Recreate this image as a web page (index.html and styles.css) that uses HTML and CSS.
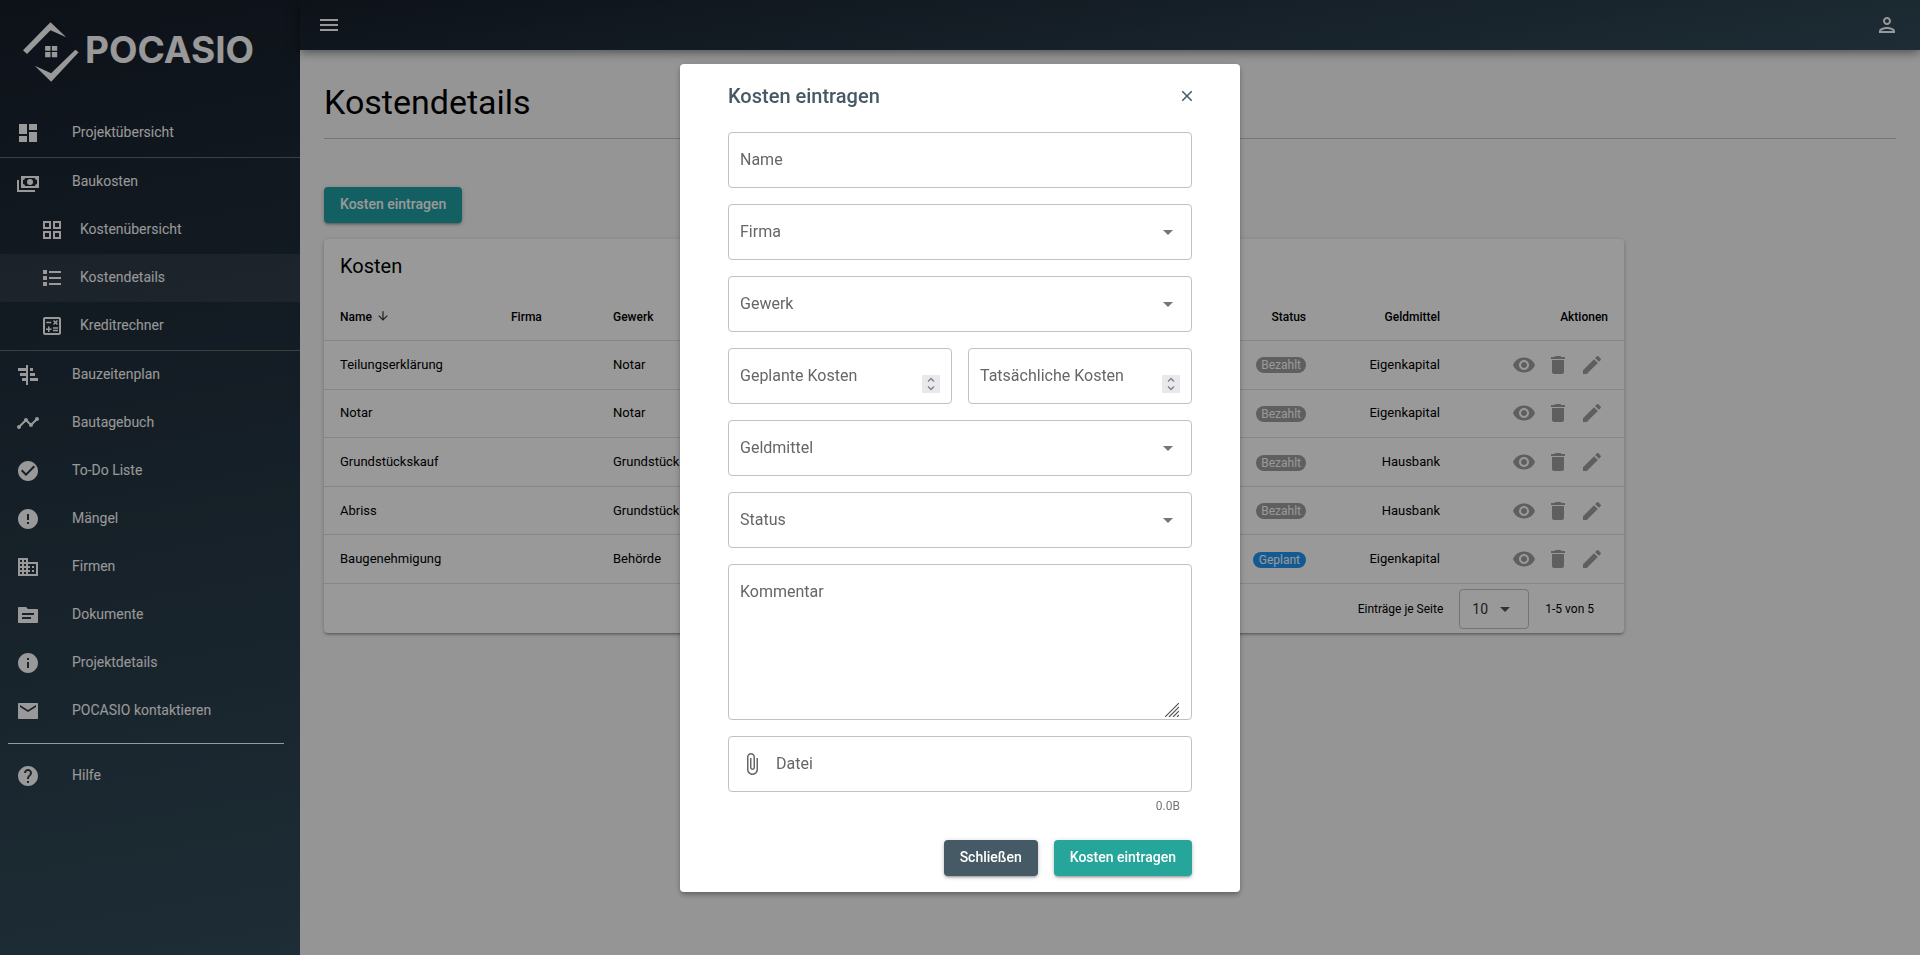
FILE: index.html
```html
<!DOCTYPE html>
<html lang="de">
<head>
<meta charset="utf-8">
<title>POCASIO – Kostendetails</title>
<link rel="stylesheet" href="styles.css">
</head>
<body>
<svg class="sprite" aria-hidden="true">
  <symbol id="menu" viewBox="0 0 24 24"><path d="M3 18h18v-2H3v2zm0-5h18v-2H3v2zm0-7v2h18V6H3z"/></symbol>
  <symbol id="person" viewBox="0 0 24 24"><path d="M12 6c1.1 0 2 .9 2 2s-.9 2-2 2-2-.9-2-2 .9-2 2-2m0 10c2.7 0 5.8 1.29 6 2H6c.23-.72 3.31-2 6-2m0-12C9.79 4 8 5.79 8 8s1.79 4 4 4 4-1.79 4-4-1.79-4-4-4zm0 10c-2.67 0-8 1.34-8 4v2h16v-2c0-2.66-5.33-4-8-4z"/></symbol>
  <symbol id="dashboard" viewBox="0 0 24 24"><path d="M3 13h8V3H3v10zm0 8h8v-6H3v6zm10 0h8V11h-8v10zm0-18v6h8V3h-8z"/></symbol>
  <symbol id="payments" viewBox="0 0 24 24"><path fill-rule="evenodd" d="M5 6h18v12H5zM9 8c0 1.1-.9 2-2 2v4c1.1 0 2 .9 2 2h10c0-1.1.9-2 2-2v-4c-1.1 0-2-.9-2-2z"/><circle cx="14" cy="12" r="3"/><path d="M1 10h2v10h16v2H1z"/></symbol>
  <symbol id="grid" viewBox="0 0 24 24"><path d="M3 3v8h8V3H3zm6 6H5V5h4v4zm-6 4v8h8v-8H3zm6 6H5v-4h4v4zm4-16v8h8V3h-8zm6 6h-4V5h4v4zm-6 4v8h8v-8h-8zm6 6h-4v-4h4v4z"/></symbol>
  <symbol id="list" viewBox="0 0 24 24"><path d="M3 4h4v4H3zM3 10h4v4H3zM3 16h4v4H3zM9 5h12v2H9zM9 11h12v2H9zM9 17h12v2H9z"/></symbol>
  <symbol id="calculate" viewBox="0 0 24 24"><path d="M19 3H5c-1.1 0-2 .9-2 2v14c0 1.1.9 2 2 2h14c1.1 0 2-.9 2-2V5c0-1.1-.9-2-2-2zm0 16H5V5h14v14z"/><path d="M6.25 7.72h5v1.5h-5zM13 15.75h5v1.5h-5zM13 13.25h5v1.5h-5zM8 18h1.5v-2h2v-1.5h-2v-2H8v2H6V16h2zM14.09 10.95l1.41-1.41 1.41 1.41 1.06-1.06-1.41-1.42 1.41-1.41L16.91 6l-1.41 1.41L14.09 6l-1.06 1.06 1.41 1.41-1.41 1.42z"/></symbol>
  <symbol id="plan" viewBox="0 0 24 24"><path d="M10 2h2v20h-2zM2 5h8v3H2zM4 10h6v3H4zM6 15h4v3H6zM14 5h3v3h-3zM14 10h5v3h-5zM14 15h8v3h-8z"/></symbol>
  <symbol id="timeline" viewBox="0 0 24 24"><path d="M23 8c0 1.1-.9 2-2 2-.18 0-.35-.02-.51-.07l-3.56 3.55c.05.16.07.34.07.52 0 1.1-.9 2-2 2s-2-.9-2-2c0-.18.02-.36.07-.52l-2.55-2.55c-.16.05-.34.07-.52.07s-.36-.02-.52-.07l-4.55 4.56c.05.16.07.33.07.51 0 1.1-.9 2-2 2s-2-.9-2-2 .9-2 2-2c.18 0 .35.02.51.07l4.56-4.55C8.02 9.36 8 9.18 8 9c0-1.1.9-2 2-2s2 .9 2 2c0 .18-.02.36-.07.52l2.55 2.55c.16-.05.34-.07.52-.07s.36.02.52.07l3.55-3.56C19.02 8.35 19 8.18 19 8c0-1.1.9-2 2-2s2 .9 2 2z"/></symbol>
  <symbol id="check" viewBox="0 0 24 24"><path d="M12 2C6.48 2 2 6.48 2 12s4.48 10 10 10 10-4.48 10-10S17.52 2 12 2zm-2 15l-5-5 1.41-1.41L10 14.17l7.59-7.59L19 8l-9 9z"/></symbol>
  <symbol id="error" viewBox="0 0 24 24"><path d="M12 2C6.48 2 2 6.48 2 12s4.48 10 10 10 10-4.48 10-10S17.52 2 12 2zm1 15h-2v-2h2v2zm0-4h-2V7h2v6z"/></symbol>
  <symbol id="business" viewBox="0 0 24 24"><path d="M12 7V3H2v18h20V7H12zM6 19H4v-2h2v2zm0-4H4v-2h2v2zm0-4H4V9h2v2zm0-4H4V5h2v2zm4 12H8v-2h2v2zm0-4H8v-2h2v2zm0-4H8V9h2v2zm0-4H8V5h2v2zm10 12h-8v-2h2v-2h-2v-2h2v-2h-2V9h8v10zm-2-8h-2v2h2v-2zm0 4h-2v2h2v-2z"/></symbol>
  <symbol id="source" viewBox="0 0 24 24"><path d="M21 6h-9l-2-2H3c-.6 0-1 .4-1 1v14c0 .6.4 1 1 1h18c.6 0 1-.4 1-1V7c0-.6-.4-1-1-1zm-6 10H6v-2h9v2zm3-4H6v-2h12v2z"/></symbol>
  <symbol id="info" viewBox="0 0 24 24"><path d="M12 2C6.48 2 2 6.48 2 12s4.48 10 10 10 10-4.48 10-10S17.52 2 12 2zm1 15h-2v-6h2v6zm0-8h-2V7h2v2z"/></symbol>
  <symbol id="mail" viewBox="0 0 24 24"><path d="M21.5 4h-19c-.3 0-.5.2-.5.5v15c0 .3.2.5.5.5h19c.3 0 .5-.2.5-.5v-15c0-.3-.2-.5-.5-.5zM20 8l-8 5-8-5V6l8 5 8-5v2z"/></symbol>
  <symbol id="help" viewBox="0 0 24 24"><path d="M12 2C6.48 2 2 6.48 2 12s4.48 10 10 10 10-4.48 10-10S17.52 2 12 2zm1 17h-2v-2h2v2zm2.07-7.75l-.9.92C13.45 12.9 13 13.5 13 15h-2v-.5c0-1.1.45-2.1 1.17-2.83l1.24-1.26c.37-.36.59-.86.59-1.41 0-1.1-.9-2-2-2s-2 .9-2 2H8c0-2.21 1.79-4 4-4s4 1.79 4 4c0 .88-.36 1.68-.93 2.25z"/></symbol>
  <symbol id="eye" viewBox="0 0 24 24"><path d="M12 4.5C7 4.5 2.73 7.61 1 12c1.73 4.39 6 7.5 11 7.5s9.27-3.11 11-7.5c-1.73-4.39-6-7.5-11-7.5zM12 17c-2.76 0-5-2.24-5-5s2.24-5 5-5 5 2.24 5 5-2.24 5-5 5zm0-8c-1.66 0-3 1.34-3 3s1.34 3 3 3 3-1.34 3-3-1.34-3-3-3z"/></symbol>
  <symbol id="trash" viewBox="0 0 24 24"><path d="M6 19c0 1.1.9 2 2 2h8c1.1 0 2-.9 2-2V7H6v12zM19 4h-3.5l-1-1h-5l-1 1H5v2h14V4z"/></symbol>
  <symbol id="edit" viewBox="0 0 24 24"><path d="M3 17.25V21h3.75L17.81 9.94l-3.75-3.75L3 17.25zM20.71 7.04c.39-.39.39-1.02 0-1.41l-2.34-2.34c-.39-.39-1.02-.39-1.41 0l-1.83 1.83 3.75 3.75 1.83-1.83z"/></symbol>
  <symbol id="drop" viewBox="0 0 24 24"><path d="M7 10l5 5 5-5z"/></symbol>
  <symbol id="down" viewBox="0 0 24 24"><path d="M20 12l-1.41-1.41L13 16.17V4h-2v12.17l-5.58-5.59L4 12l8 8 8-8z"/></symbol>
  <symbol id="close" viewBox="0 0 24 24"><path d="M19 6.41L17.59 5 12 10.59 6.41 5 5 6.41 10.59 12 5 17.59 6.41 19 12 13.41 17.59 19 19 17.59 13.41 12z"/></symbol>
  <symbol id="clip" viewBox="0 0 24 24"><path d="M16.5 6v11.5c0 2.21-1.79 4-4 4s-4-1.79-4-4V5c0-1.38 1.12-2.5 2.5-2.5s2.5 1.12 2.5 2.5v10.5c0 .55-.45 1-1 1s-1-.45-1-1V6H10v9.5c0 1.38 1.12 2.5 2.5 2.5s2.5-1.12 2.5-2.5V5c0-2.21-1.79-4-4-4S7 2.79 7 5v12.5c0 3.04 2.46 5.5 5.5 5.5s5.5-2.46 5.5-5.5V6h-1.5z"/></symbol>
  <symbol id="spin" viewBox="0 0 18 18"><path d="M6 6.5l3-3 3 3M6 11.5l3 3 3-3" fill="none" stroke="#84848c" stroke-width="1.5"/></symbol>
  <symbol id="grip" viewBox="0 0 14 14"><path d="M0 14L14 0M4 14L14 4M8 14l6-6M12 14l2-2" fill="none" stroke="#555" stroke-width="1.2"/></symbol>
</svg>

<div class="app">
  <aside class="sidebar">
    <a class="logo" href="#">
      <svg class="logo-mark" viewBox="69 67 167 178" aria-hidden="true"><path d="M69 151L151 67 198 112 151 91 81 162zM235 157L153 245 104 197 153 219 225 149zM135 138h16v14h-16zM155 138h16v14h-16zM135 156h16v16h-16zM155 156h16v16h-16z"/></svg>
      <span class="logo-text">POCASIO</span>
    </a>
    <nav class="nav">
      <a class="nav-item" href="#"><svg class="icon"><use href="#dashboard"/></svg><span>Projektübersicht</span></a>
      <div class="nav-group">
        <a class="nav-item" href="#"><svg class="icon"><use href="#payments"/></svg><span>Baukosten</span></a>
        <a class="nav-item sub" href="#"><svg class="icon"><use href="#grid"/></svg><span>Kostenübersicht</span></a>
        <a class="nav-item sub active" href="#"><svg class="icon"><use href="#list"/></svg><span>Kostendetails</span></a>
        <a class="nav-item sub" href="#"><svg class="icon"><use href="#calculate"/></svg><span>Kreditrechner</span></a>
      </div>
      <a class="nav-item" href="#"><svg class="icon"><use href="#plan"/></svg><span>Bauzeitenplan</span></a>
      <a class="nav-item" href="#"><svg class="icon"><use href="#timeline"/></svg><span>Bautagebuch</span></a>
      <a class="nav-item" href="#"><svg class="icon"><use href="#check"/></svg><span>To-Do Liste</span></a>
      <a class="nav-item" href="#"><svg class="icon"><use href="#error"/></svg><span>Mängel</span></a>
      <a class="nav-item" href="#"><svg class="icon"><use href="#business"/></svg><span>Firmen</span></a>
      <a class="nav-item" href="#"><svg class="icon"><use href="#source"/></svg><span>Dokumente</span></a>
      <a class="nav-item" href="#"><svg class="icon"><use href="#info"/></svg><span>Projektdetails</span></a>
      <a class="nav-item" href="#"><svg class="icon"><use href="#mail"/></svg><span>POCASIO kontaktieren</span></a>
      <hr class="nav-rule">
      <a class="nav-item" href="#"><svg class="icon"><use href="#help"/></svg><span>Hilfe</span></a>
    </nav>
  </aside>

  <div class="content">
    <header class="topbar">
      <button class="icon-btn" type="button" aria-label="Menü"><svg class="icon"><use href="#menu"/></svg></button>
      <button class="icon-btn" type="button" aria-label="Konto"><svg class="icon"><use href="#person"/></svg></button>
    </header>
    <main class="page">
      <h1 class="page-title">Kostendetails</h1>
      <button class="btn btn-page" type="button">Kosten eintragen</button>
      <section class="card">
        <h2 class="card-title">Kosten</h2>
        <table class="costs">
          <colgroup><col class="c-name"><col class="c-firm"><col><col class="c-status"><col class="c-money"><col class="c-actions"></colgroup>
          <thead>
            <tr><th>Name<svg class="sort"><use href="#down"/></svg></th><th>Firma</th><th>Gewerk</th><th class="r">Status</th><th class="r">Geldmittel</th><th class="r">Aktionen</th></tr>
          </thead>
          <tbody>
            <tr><td>Teilungserklärung</td><td></td><td>Notar</td><td class="r"><span class="badge">Bezahlt</span></td><td class="r">Eigenkapital</td><td><div class="actions"><button type="button" aria-label="Ansehen"><svg class="icon"><use href="#eye"/></svg></button><button type="button" aria-label="Löschen"><svg class="icon"><use href="#trash"/></svg></button><button type="button" aria-label="Bearbeiten"><svg class="icon"><use href="#edit"/></svg></button></div></td></tr>
            <tr><td>Notar</td><td></td><td>Notar</td><td class="r"><span class="badge">Bezahlt</span></td><td class="r">Eigenkapital</td><td><div class="actions"><button type="button" aria-label="Ansehen"><svg class="icon"><use href="#eye"/></svg></button><button type="button" aria-label="Löschen"><svg class="icon"><use href="#trash"/></svg></button><button type="button" aria-label="Bearbeiten"><svg class="icon"><use href="#edit"/></svg></button></div></td></tr>
            <tr><td>Grundstückskauf</td><td></td><td>Grundstück</td><td class="r"><span class="badge">Bezahlt</span></td><td class="r">Hausbank</td><td><div class="actions"><button type="button" aria-label="Ansehen"><svg class="icon"><use href="#eye"/></svg></button><button type="button" aria-label="Löschen"><svg class="icon"><use href="#trash"/></svg></button><button type="button" aria-label="Bearbeiten"><svg class="icon"><use href="#edit"/></svg></button></div></td></tr>
            <tr><td>Abriss</td><td></td><td>Grundstück</td><td class="r"><span class="badge">Bezahlt</span></td><td class="r">Hausbank</td><td><div class="actions"><button type="button" aria-label="Ansehen"><svg class="icon"><use href="#eye"/></svg></button><button type="button" aria-label="Löschen"><svg class="icon"><use href="#trash"/></svg></button><button type="button" aria-label="Bearbeiten"><svg class="icon"><use href="#edit"/></svg></button></div></td></tr>
            <tr><td>Baugenehmigung</td><td></td><td>Behörde</td><td class="r"><span class="badge planned">Geplant</span></td><td class="r">Eigenkapital</td><td><div class="actions"><button type="button" aria-label="Ansehen"><svg class="icon"><use href="#eye"/></svg></button><button type="button" aria-label="Löschen"><svg class="icon"><use href="#trash"/></svg></button><button type="button" aria-label="Bearbeiten"><svg class="icon"><use href="#edit"/></svg></button></div></td></tr>
          </tbody>
        </table>
        <div class="pager">
          <label for="per-page">Einträge je Seite</label>
          <div class="pager-select">
            <select id="per-page"><option>10</option><option>25</option></select>
            <svg class="icon"><use href="#drop"/></svg>
          </div>
          <span>1-5 von 5</span>
        </div>
      </section>
    </main>
  </div>
</div>

<div class="backdrop">
  <form class="dialog" role="dialog" aria-modal="true" aria-labelledby="dialog-title">
    <div class="dialog-head">
      <h2 class="dialog-title" id="dialog-title">Kosten eintragen</h2>
      <button class="close" type="button" aria-label="Dialog schließen"><svg><use href="#close"/></svg></button>
    </div>
    <div class="fields">
      <div class="field"><input id="f-name" type="text"><label for="f-name">Name</label></div>
      <div class="field"><select id="f-firma"><option></option></select><label for="f-firma">Firma</label><svg class="icon drop"><use href="#drop"/></svg></div>
      <div class="field"><select id="f-gewerk"><option></option></select><label for="f-gewerk">Gewerk</label><svg class="icon drop"><use href="#drop"/></svg></div>
      <div class="field-row">
        <div class="field"><input id="f-plan" type="number"><label for="f-plan">Geplante Kosten</label><svg class="spin"><use href="#spin"/></svg></div>
        <div class="field"><input id="f-ist" type="number"><label for="f-ist">Tatsächliche Kosten</label><svg class="spin"><use href="#spin"/></svg></div>
      </div>
      <div class="field"><select id="f-geld"><option></option></select><label for="f-geld">Geldmittel</label><svg class="icon drop"><use href="#drop"/></svg></div>
      <div class="field"><select id="f-status"><option></option></select><label for="f-status">Status</label><svg class="icon drop"><use href="#drop"/></svg></div>
      <div class="field"><textarea id="f-kommentar"></textarea><label for="f-kommentar">Kommentar</label><svg class="grip"><use href="#grip"/></svg></div>
      <div class="field file"><input id="f-datei" type="file"><label for="f-datei"><svg class="icon"><use href="#clip"/></svg>Datei</label></div>
    </div>
    <p class="counter">0.0B</p>
    <div class="dialog-actions">
      <button class="btn btn-dark" type="button">Schließen</button>
      <button class="btn btn-teal" type="submit">Kosten eintragen</button>
    </div>
  </form>
</div>
</body>
</html>
```
FILE: styles.css
```css
* { box-sizing: border-box; }

body {
  margin: 0;
  font-family: Roboto, "Liberation Sans", sans-serif;
  font-size: 14px;
  line-height: 20px;
  color: #000;
  background: #f9f9f9;
}

button, input, select, textarea { font: inherit; color: inherit; }
h1, h2, p { margin: 0; }
a { color: inherit; text-decoration: none; }

.sprite { display: none; }
.icon { display: block; flex: none; width: 24px; height: 24px; fill: currentColor; }

.app { display: flex; min-height: 100vh; }

/* Sidebar */
.sidebar {
  flex: none;
  width: 300px;
  color: #fff;
  background: linear-gradient(170deg, #171e2a, #324c5a);
}
.logo { display: flex; align-items: center; gap: 6px; height: 109px; padding: 0 23px 6px; }
.logo-mark { flex: none; width: 56px; height: 60px; fill: #fff; }
.logo-text { padding-bottom: 4px; font-family: Inter, sans-serif; font-size: 37px; font-weight: 700; line-height: 40px; }

.nav-item { display: flex; align-items: center; gap: 32px; height: 48px; padding: 0 16px; }
.nav-item span { padding-bottom: 2px; }
.nav-item.sub { gap: 16px; padding-left: 40px; }
.nav-item.active { background: rgba(255, 255, 255, 0.08); }
.nav-group { border: solid #6a6a6a; border-width: 1px 0; }
.nav-rule { height: 1px; margin: 8px 16px 8px 8px; border: 0; background: #fff; }

/* Top bar and page */
.content { flex: 1; min-width: 0; }
.topbar {
  display: flex;
  align-items: center;
  justify-content: space-between;
  height: 50px;
  padding: 0 21px 0 17px;
  color: #fff;
  background: linear-gradient(170deg, #171e2a, #324c5a);
  box-shadow: 0 2px 10px rgba(0, 0, 0, 0.5);
}
.icon-btn { padding: 0; border: 0; background: none; }

.page { padding: 24px; }
.page-title {
  height: 65px;
  margin-bottom: 48px;
  border-bottom: 1px solid #c4c4c4;
  font-size: 34px;
  font-weight: 400;
  line-height: 56px;
}

.btn {
  display: block;
  height: 36px;
  padding: 0 16px 2px;
  border: 0;
  border-radius: 4px;
  color: #fff;
  font-weight: 500;
  box-shadow: 0 1px 5px rgba(0, 0, 0, 0.2), 0 2px 2px rgba(0, 0, 0, 0.14), 0 3px 1px -2px rgba(0, 0, 0, 0.12);
}
.btn-page { background: #21a0a6; }
.btn-teal { background: #26a69a; }
.btn-dark { background: #455a64; }

.card {
  max-width: 1300px;
  margin-top: 16px;
  border-radius: 4px;
  background: #fff;
  box-shadow: 0 1px 5px rgba(0, 0, 0, 0.2), 0 2px 2px rgba(0, 0, 0, 0.14), 0 3px 1px -2px rgba(0, 0, 0, 0.12);
}
.card-title { padding: 11px 16px; font-size: 20px; font-weight: 400; line-height: 32px; }

.costs { width: 100%; height: 291px; table-layout: fixed; border-collapse: separate; border-spacing: 0; font-size: 13px; }
.c-name { width: 171px; }
.c-firm { width: 102px; }
.c-status { width: 120px; }
.c-money { width: 134px; }
.c-actions { width: 168px; }
.costs th, .costs td { padding: 0 16px; border-bottom: 1px solid #e0e0e0; text-align: left; }
.costs th { height: 48px; font-size: 12px; font-weight: 500; }
.costs .r { text-align: right; }
.sort { width: 14px; height: 14px; margin-left: 4px; vertical-align: -2px; fill: #333; }
.badge {
  display: inline-block;
  padding: 2px 5px;
  border-radius: 8px;
  color: #fff;
  font-size: 12px;
  line-height: 12px;
  vertical-align: middle;
  background: #9e9e9e;
}
.badge.planned { padding: 2px 6px; background: #2196f3; }
.actions { display: flex; justify-content: flex-end; margin-right: -1px; color: #9e9e9e; }
.actions button { padding: 0 5px; border: 0; background: none; }

.pager {
  display: flex;
  align-items: center;
  justify-content: flex-end;
  gap: 16px;
  height: 49px;
  padding-right: 30px;
  font-size: 12px;
}
.pager-select { position: relative; width: 70px; color: #555; }
.pager-select select {
  display: block;
  width: 100%;
  height: 40px;
  padding: 0 12px;
  border: 1px solid #c2c2c2;
  border-radius: 4px;
  background: none;
  color: #333;
  font-size: 14px;
  appearance: none;
}
.pager-select .icon { position: absolute; top: 8px; right: 12px; pointer-events: none; }

/* Dialog */
.backdrop {
  position: fixed;
  inset: 0;
  display: grid;
  place-items: center;
  background: rgba(0, 0, 0, 0.4);
}
.dialog {
  width: 560px;
  max-width: 100%;
  padding: 16px 48px;
  border-radius: 4px;
  background: #fff;
  box-shadow: 0 2px 4px -1px rgba(0, 0, 0, 0.2), 0 4px 5px rgba(0, 0, 0, 0.14), 0 1px 10px rgba(0, 0, 0, 0.12);
}
.dialog-head { display: flex; align-items: center; justify-content: space-between; margin-bottom: 20px; color: #455a64; }
.dialog-title { font-size: 20px; font-weight: 500; line-height: 32px; }
.close { margin-right: -4px; padding: 0; border: 0; background: none; }
.close svg { display: block; width: 18px; height: 18px; fill: currentColor; }

.fields { display: grid; gap: 16px; color: #666; }
.field-row { display: grid; grid-template-columns: 1fr 1fr; gap: 16px; }
.field { position: relative; font-size: 16px; }
.field input, .field select, .field textarea {
  display: block;
  width: 100%;
  height: 56px;
  padding: 16px 12px 0;
  border: 1px solid #c2c2c2;
  border-radius: 4px;
  background: none;
  appearance: none;
  resize: none;
}
.field input::-webkit-inner-spin-button { display: none; }
.field textarea { height: 156px; }
.field label {
  position: absolute;
  top: 18px;
  left: 12px;
  display: flex;
  align-items: center;
  gap: 12px;
  pointer-events: none;
}
.drop { position: absolute; top: 16px; right: 12px; color: #757575; pointer-events: none; }
.spin { position: absolute; right: 12px; bottom: 11px; width: 18px; height: 18px; background: #e9e9ed; }
.grip { position: absolute; right: 13px; bottom: 3px; width: 14px; height: 14px; pointer-events: none; }
.file input { opacity: 0; }
.file { height: 56px; border: 1px solid #c2c2c2; border-radius: 4px; }
.file label { top: 15px; left: 11px; }

.counter { height: 48px; padding: 8px 12px 0; color: #757575; font-size: 12px; line-height: 12px; text-align: right; }
.dialog-actions { display: flex; justify-content: flex-end; gap: 16px; }
```
